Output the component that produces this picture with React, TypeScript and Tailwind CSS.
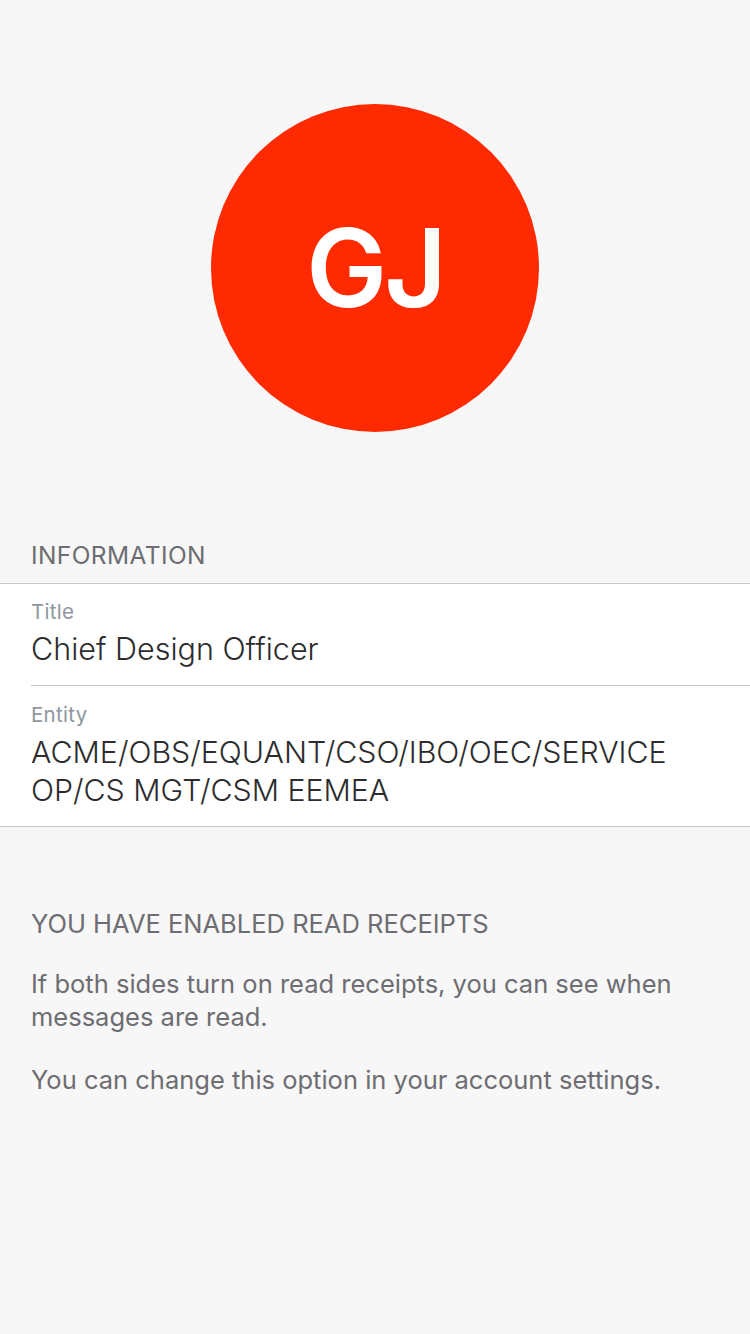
export default function App() {
  return (
    <div
      className="min-h-[1334px] w-[750px] bg-[#f7f7f7] text-[#3a3a3c]"
      style={{ fontFamily: 'Inter, "Noto Sans", sans-serif' }}
    >
      {/* avatar */}
      <div className="flex justify-center pt-[104px]">
        <div className="flex h-[328px] w-[328px] items-center justify-center rounded-full bg-[#ff2a00]">
          <span className="text-[108px] font-semibold leading-none tracking-[-3px] text-white">GJ</span>
        </div>
      </div>

      {/* information */}
      <div className="mt-[108px] px-[31px] pb-[13px] text-[24.5px] leading-[30px] tracking-[0.4px] text-[#6d6d72]">
        INFORMATION
      </div>
      <div className="border-y border-[#c8c7cc] bg-white">
        <div className="px-[31px] pt-[15px] pb-[18px]">
          <div className="text-[20.5px] leading-[26px] tracking-[0.3px] text-[#8e969e]">Title</div>
          <div className="mt-[6px] text-[30.5px] font-light leading-[36px] text-[#2c2c2e]">Chief Design Officer</div>
        </div>
        <div className="ml-[31px] border-t border-[#c8c7cc]" />
        <div className="px-[31px] pt-[16px] pb-[17px]">
          <div className="text-[20.5px] leading-[26px] tracking-[0.3px] text-[#8e969e]">Entity</div>
          <div className="mt-[5px] text-[30.3px] font-light leading-[38px] text-[#2c2c2e]">
            ACME/OBS/EQUANT/CSO/IBO/OEC/SERVICE OP/CS MGT/CSM EEMEA
          </div>
        </div>
      </div>

      {/* read receipts */}
      <div className="px-[31px] pt-[82px] text-[25.5px] text-[#6d6d72]">
        <div className="leading-[30px]">YOU HAVE ENABLED READ RECEIPTS</div>
        <p className="mt-[28px] leading-[33px]">
          If both sides turn on read receipts, you can see when messages are read.
        </p>
        <p className="mt-[30px] leading-[33px]">You can change this option in your account settings.</p>
      </div>
    </div>
  )
}
